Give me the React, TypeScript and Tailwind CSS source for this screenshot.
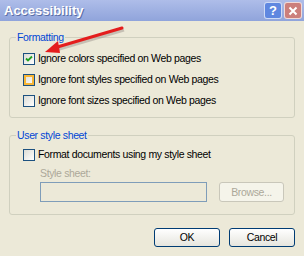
import React from 'react';

const Check: React.FC<{ checked?: boolean; hover?: boolean }> = ({ checked, hover }) => (
  <span
    className={`relative flex w-[12px] h-[12px] shrink-0 items-center justify-center border border-[#1c5180] bg-gradient-to-br from-[#dcdcd5] to-white ${
      hover ? 'shadow-[inset_0_0_0_2px_#f8b636]' : ''
    }`}
  >
    {checked && (
      <svg width="8" height="8" viewBox="0 0 8 8">
        <path d="M1 3.5 L3 5.5 L7 1.5" stroke="#21a121" strokeWidth="1.8" fill="none" />
      </svg>
    )}
  </span>
);

const Row: React.FC<{ label: string; checked?: boolean; hover?: boolean }> = ({ label, checked, hover }) => (
  <div className="flex items-center gap-[3px] h-[21px]">
    <Check checked={checked} hover={hover} />
    <span>{label}</span>
  </div>
);

export default function App() {
  return (
    <div className="relative w-[304px] h-[256px] overflow-hidden bg-[#ece9d8] text-[10.5px] tracking-[-0.35px] leading-[13px] text-black font-['Tahoma','Liberation_Sans',sans-serif] flex flex-col">
      {/* title bar */}
      <div className="h-[21px] flex items-center justify-between pl-[4px] pr-[2px] bg-gradient-to-b from-[#aebde9] to-[#90a4db] tracking-normal">
        <span className="text-white font-bold text-[13px] [text-shadow:1px_1px_#5a6fa8]">Accessibility</span>
        <div className="flex gap-[2px]">
          <span className="w-[18px] h-[17px] rounded-[3px] border border-white/70 bg-[#5f87e0] text-white font-bold text-[13px] flex items-center justify-center">?</span>
          <span className="w-[18px] h-[17px] rounded-[3px] border border-white/70 bg-[#cc7f7c] text-white flex items-center justify-center">
            <svg width="10" height="10" viewBox="0 0 10 10">
              <path d="M1.5 1.5 L8.5 8.5 M8.5 1.5 L1.5 8.5" stroke="white" strokeWidth="2" />
            </svg>
          </span>
        </div>
      </div>

      <div className="flex flex-col px-[9px] pt-[10px]">
        <fieldset className="border border-[#d0d0bf] rounded-[3px] pl-[13px] pb-[6px] pt-[4px]">
          <legend className="text-[#0046d5] ml-[-7px] px-[1px]">Formatting</legend>
          <Row label="Ignore colors specified on Web pages" checked />
          <Row label="Ignore font styles specified on Web pages" hover />
          <Row label="Ignore font sizes specified on Web pages" />
        </fieldset>

        <fieldset className="mt-[11px] border border-[#d0d0bf] rounded-[3px] pl-[13px] pb-[12px] pt-[2px]">
          <legend className="text-[#0046d5] ml-[-7px] px-[1px]">User style sheet</legend>
          <Row label="Format documents using my style sheet" />
          <div className="pl-[17px] mt-[2px] text-[#aca899]">Style sheet:</div>
          <div className="flex items-center pl-[17px] mt-[2px] gap-[12px]">
            <div className="w-[167px] h-[20px] border border-[#7f9db9]" />
            <div className="w-[65px] h-[20px] rounded-[3px] border border-[#c9c7ba] bg-[#f5f4ea] text-[#aca899] flex items-center justify-center">Browse...</div>
          </div>
        </fieldset>

        <div className="flex justify-end gap-[9px] mt-[13px]">
          <button className="w-[66px] h-[19px] rounded-[3px] border border-[#003c74] bg-gradient-to-b from-white to-[#e6e5de]">OK</button>
          <button className="w-[66px] h-[19px] rounded-[3px] border border-[#003c74] bg-gradient-to-b from-white to-[#e6e5de]">Cancel</button>
        </div>
      </div>

      {/* annotation arrow */}
      <svg className="absolute left-0 top-0 pointer-events-none" width="304" height="256">
        <path d="M124 30 L56 50" stroke="#9a8f8a" strokeOpacity="0.45" strokeWidth="3" />
        <path d="M122 28 L54 48" stroke="#e41d1d" strokeWidth="3" strokeLinecap="round" />
        <path d="M45 52 L58 41 L60 53 Z" fill="#e41d1d" />
      </svg>
    </div>
  );
}
